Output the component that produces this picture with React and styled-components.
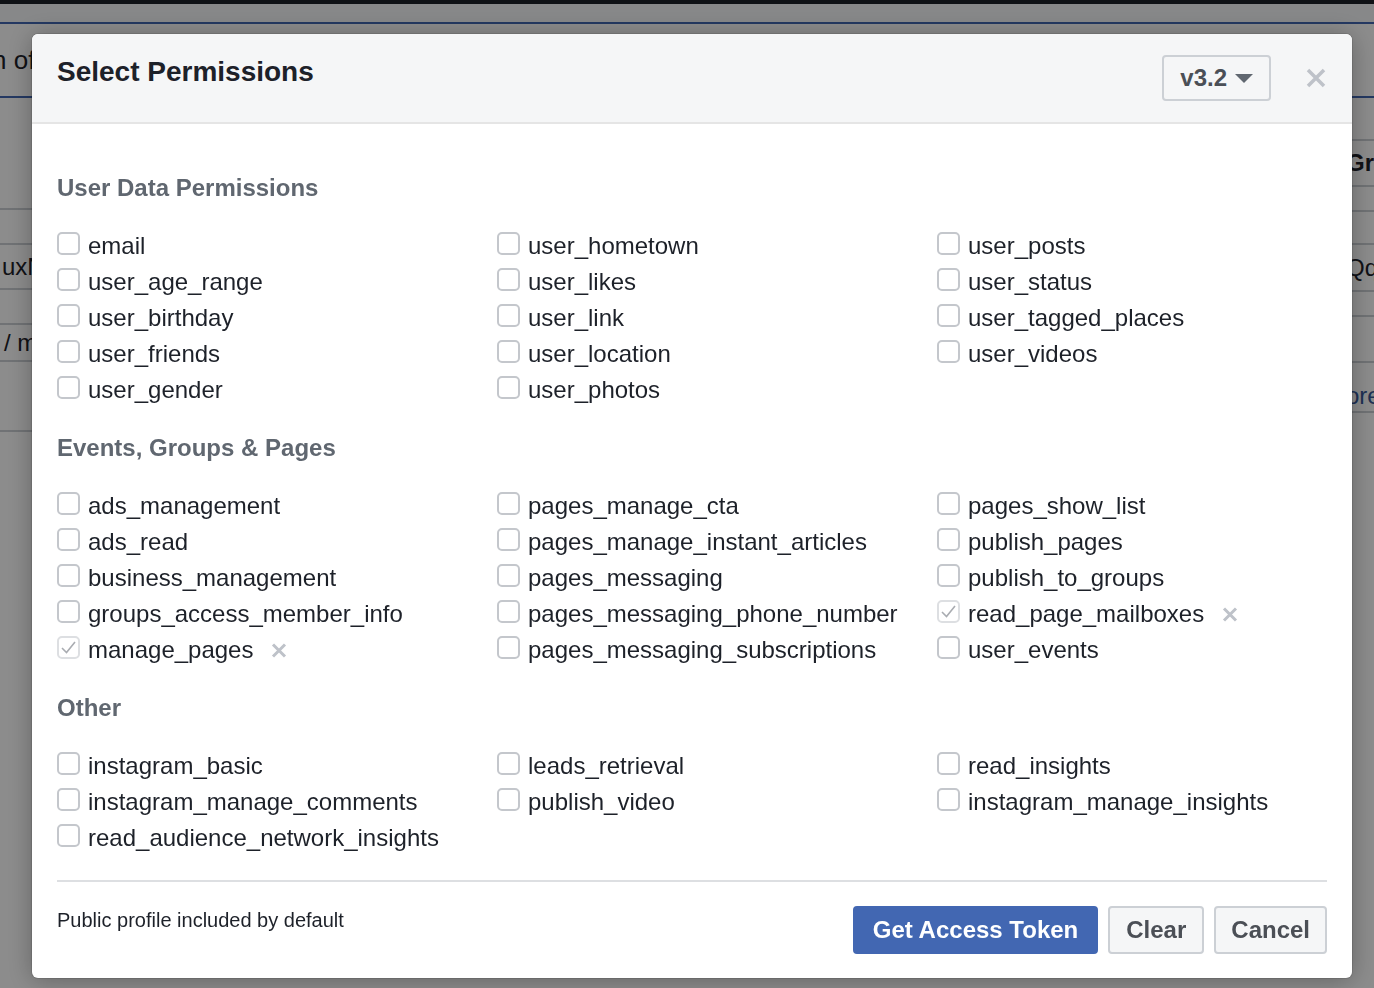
import React from 'react';
import styled, { createGlobalStyle } from 'styled-components';

const GlobalStyle = createGlobalStyle`
  * { box-sizing: border-box; }
  html, body { margin: 0; padding: 0; }
  body {
    font-family: "Liberation Sans", Arial, Helvetica, sans-serif;
    background: #fff;
    overflow: hidden;
  }
`;

/* ---------- page behind the dialog ---------- */

const Page = styled.div`
  height: 988px;
  background: #fff;
  overflow: hidden;
`;

const TopBar = styled.div`
  height: 4px;
  background: #1d2129;
`;

const Nav = styled.div`
  height: 18px;
  background: #f6f7f9;
`;

const BlueRule = styled.div`
  height: 2px;
  background: #4267b2;
`;

const Hero = styled.div`
  height: 72px;
  display: flex;
  align-items: center;
  font-size: 26px;
  color: #1d2129;
  white-space: nowrap;
`;

const HeroText = styled.span`
  margin-left: -8px;
`;

const BgTable = styled.div`
  display: flex;
`;

const BgCol = styled.div`
  width: ${p => p.$w}px;
  flex: none;
  overflow: hidden;
`;

const BgSpacer = styled.div`
  flex: 1;
`;

const BgRow = styled.div`
  height: ${p => p.$h}px;
  border-bottom: 2px solid #ccd0d5;
  display: flex;
  align-items: center;
  white-space: nowrap;
  font-size: 24px;
  font-weight: ${p => (p.$bold ? 'bold' : 'normal')};
  color: ${p => (p.$link ? '#365899' : '#1d2129')};
  padding-left: ${p => p.$pad || 0}px;
  padding-top: ${p => p.$top || 0}px;
`;

/* ---------- dialog ---------- */

const Overlay = styled.div`
  position: fixed;
  inset: 0;
  background: rgba(0, 0, 0, 0.45);
`;

const Dialog = styled.div`
  position: fixed;
  top: 34px;
  left: 32px;
  width: 1320px;
  background: #fff;
  border-radius: 6px;
  overflow: hidden;
  box-shadow: 0 2px 26px rgba(0, 0, 0, 0.3), 0 0 0 1px rgba(0, 0, 0, 0.1);
`;

const Header = styled.div`
  height: 90px;
  display: flex;
  align-items: flex-start;
  padding: 0 26px 0 25px;
  background: #f5f6f7;
  border-bottom: 2px solid #e5e5e5;
`;

const Title = styled.h1`
  flex: 1;
  margin: 20px 0 0;
  font-size: 28px;
  line-height: 36px;
  font-weight: bold;
  color: #1d2129;
`;

const VersionSelect = styled.button`
  margin-top: 21px;
  height: 46px;
  display: flex;
  align-items: center;
  gap: 8px;
  padding: 0 16px 0 16px;
  border: 2px solid #ccd0d5;
  border-radius: 4px;
  background: #f5f6f7;
  font-family: inherit;
  font-size: 24px;
  font-weight: bold;
  color: #4b4f56;
`;

const CloseButton = styled.button`
  margin: 34px 0 0 35px;
  padding: 0;
  border: 0;
  background: none;
  display: flex;
`;

const Body = styled.div`
  padding: 46px 25px 0;
  display: flex;
  flex-direction: column;
  gap: 22px;
`;

const SectionTitle = styled.h2`
  margin: 0 0 22px;
  font-size: 24px;
  line-height: 36px;
  font-weight: bold;
  color: #606770;
`;

const Grid = styled.div`
  display: grid;
  grid-template-columns: 440px 440px 1fr;
`;

const Column = styled.div`
  display: flex;
  flex-direction: column;
`;

const Row = styled.label`
  height: 36px;
  display: flex;
  align-items: flex-start;
  font-size: 24px;
  line-height: 36px;
  color: #1d2129;
  white-space: nowrap;
`;

const Box = styled.span`
  width: 23px;
  height: 23px;
  margin: 4px 8px 0 0;
  flex: none;
  display: flex;
  align-items: center;
  justify-content: center;
  border: 2px solid ${p => (p.$checked ? '#dddfe2' : '#c4c7cc')};
  border-radius: 5px;
  background: #fff;
`;

const Remove = styled.span`
  margin: 11px 0 0 18px;
  display: flex;
`;

const Footer = styled.div`
  margin: 24px 25px 0;
  padding: 24px 0;
  border-top: 2px solid #dddfe2;
  display: flex;
  align-items: flex-start;
`;

const Note = styled.div`
  flex: 1;
  font-size: 20px;
  line-height: 28px;
  color: #1d2129;
`;

const Buttons = styled.div`
  display: flex;
  gap: 10px;
`;

const Button = styled.button`
  height: 48px;
  padding: 0 ${p => p.$pad || 16}px;
  border: 2px solid ${p => (p.$primary ? '#4267b2' : '#ccd0d5')};
  border-radius: 4px;
  background: ${p => (p.$primary ? '#4267b2' : '#f5f6f7')};
  color: ${p => (p.$primary ? '#fff' : '#4b4f56')};
  font-family: inherit;
  font-size: 24px;
  font-weight: bold;
`;

const sections = [
  {
    title: 'User Data Permissions',
    columns: [
      ['email', 'user_age_range', 'user_birthday', 'user_friends', 'user_gender'],
      ['user_hometown', 'user_likes', 'user_link', 'user_location', 'user_photos'],
      ['user_posts', 'user_status', 'user_tagged_places', 'user_videos'],
    ],
  },
  {
    title: 'Events, Groups & Pages',
    columns: [
      ['ads_management', 'ads_read', 'business_management', 'groups_access_member_info', 'manage_pages'],
      ['pages_manage_cta', 'pages_manage_instant_articles', 'pages_messaging', 'pages_messaging_phone_number', 'pages_messaging_subscriptions'],
      ['pages_show_list', 'publish_pages', 'publish_to_groups', 'read_page_mailboxes', 'user_events'],
    ],
  },
  {
    title: 'Other',
    columns: [
      ['instagram_basic', 'instagram_manage_comments', 'read_audience_network_insights'],
      ['leads_retrieval', 'publish_video'],
      ['read_insights', 'instagram_manage_insights'],
    ],
  },
];

const checked = ['manage_pages', 'read_page_mailboxes'];

const leftRows = [
  { h: 112 }, { h: 35 }, { h: 45, text: 'uxN', pad: 2 }, { h: 35 },
  { h: 37, text: '/ m', pad: 4 }, { h: 70 },
];

const rightRows = [
  { h: 43 }, { h: 46, text: 'Gr', bold: true }, { h: 25 }, { h: 33 },
  { h: 47, text: 'Qq' }, { h: 25 }, { h: 46 }, { h: 50, text: 'ore', link: true, top: 18 },
];

function Permission({ name }) {
  const isChecked = checked.includes(name);
  return (
    <Row>
      <Box $checked={isChecked}>
        {isChecked && (
          <svg width="17" height="15" viewBox="0 0 17 15">
            <polyline points="2,8 6.5,12.5 15,2" fill="none" stroke="#a9acb1" strokeWidth="1.6" />
          </svg>
        )}
      </Box>
      {name}
      {isChecked && (
        <Remove>
          <svg width="16" height="15" viewBox="0 0 16 15">
            <path d="M2 1.5 L14 13.5 M14 1.5 L2 13.5" stroke="#bec2c9" strokeWidth="3" />
          </svg>
        </Remove>
      )}
    </Row>
  );
}

function App() {
  return (
    <>
      <GlobalStyle />
      <Page>
        <TopBar />
        <Nav />
        <BlueRule />
        <Hero>
          <HeroText>n of</HeroText>
        </Hero>
        <BlueRule />
        <BgTable>
          <BgCol $w={680}>
            {leftRows.map((r, i) => (
              <BgRow key={i} $h={r.h} $pad={r.pad}>{r.text}</BgRow>
            ))}
          </BgCol>
          <BgSpacer />
          <BgCol $w={28}>
            {rightRows.map((r, i) => (
              <BgRow key={i} $h={r.h} $bold={r.bold} $link={r.link} $top={r.top}>{r.text}</BgRow>
            ))}
          </BgCol>
        </BgTable>
      </Page>

      <Overlay />

      <Dialog>
        <Header>
          <Title>Select Permissions</Title>
          <VersionSelect>
            v3.2
            <svg width="18" height="9" viewBox="0 0 18 9">
              <polygon points="0,0 18,0 9,9" fill="#606770" />
            </svg>
          </VersionSelect>
          <CloseButton>
            <svg width="20" height="20" viewBox="0 0 20 20">
              <path d="M2 2 L18 18 M18 2 L2 18" stroke="#bec2c9" strokeWidth="3.5" />
            </svg>
          </CloseButton>
        </Header>

        <Body>
          {sections.map(section => (
            <div key={section.title}>
              <SectionTitle>{section.title}</SectionTitle>
              <Grid>
                {section.columns.map((col, i) => (
                  <Column key={i}>
                    {col.map(name => (
                      <Permission key={name} name={name} />
                    ))}
                  </Column>
                ))}
              </Grid>
            </div>
          ))}
        </Body>

        <Footer>
          <Note>Public profile included by default</Note>
          <Buttons>
            <Button $primary $pad={18}>Get Access Token</Button>
            <Button>Clear</Button>
            <Button $pad={15}>Cancel</Button>
          </Buttons>
        </Footer>
      </Dialog>
    </>
  );
}

export default App;
